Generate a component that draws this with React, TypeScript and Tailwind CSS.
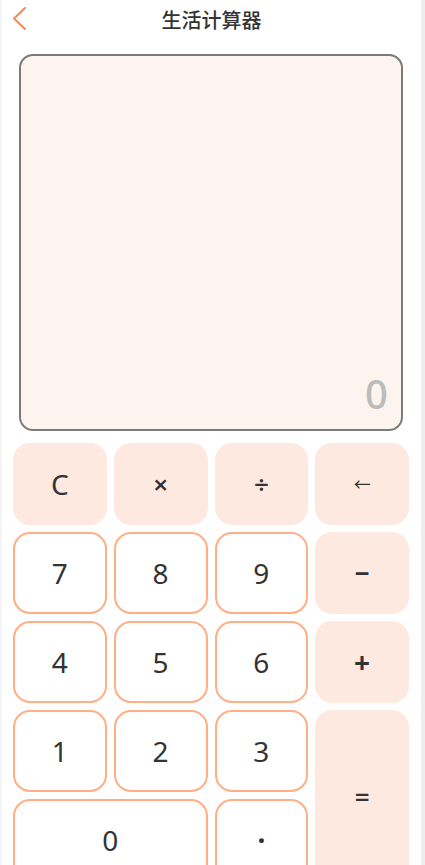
const keys = [
    { label: "C", kind: "op", cls: "text-[28px]" },
    { label: "×", kind: "op", cls: "text-[26px] font-semibold" },
    { label: "÷", kind: "op", cls: "text-[26px] font-semibold" },
    { label: "←", kind: "op", cls: "text-[17px]" },
    { label: "7", kind: "num", cls: "text-[28px]" },
    { label: "8", kind: "num", cls: "text-[28px]" },
    { label: "9", kind: "num", cls: "text-[28px]" },
    { label: "−", kind: "op", cls: "text-[26px] font-bold" },
    { label: "4", kind: "num", cls: "text-[28px]" },
    { label: "5", kind: "num", cls: "text-[28px]" },
    { label: "6", kind: "num", cls: "text-[28px]" },
    { label: "+", kind: "op", cls: "text-[28px] font-bold" },
    { label: "1", kind: "num", cls: "text-[28px]" },
    { label: "2", kind: "num", cls: "text-[28px]" },
    { label: "3", kind: "num", cls: "text-[28px]" },
    { label: "=", kind: "op", cls: "row-span-2 text-[26px] font-semibold" },
    { label: "0", kind: "num", cls: "col-span-2 text-[28px]" },
    { label: "·", kind: "num", cls: "text-[28px] font-bold" }
];

const App = () => {
    return (
        <div
            className="flex w-[425px] h-[865px] overflow-hidden bg-white text-[#333333]"
            style={{ fontFamily: '"Noto Sans", "Noto Sans CJK SC", sans-serif' }}
        >
            <div className="w-[2px] shrink-0 bg-[#f4f4f4]" />
            <div className="flex-1 flex flex-col">
                {/* header */}
                <div className="relative h-[40px] shrink-0 flex items-center justify-center">
                    <svg
                        className="absolute left-[10px] top-[6px]"
                        width="16"
                        height="26"
                        viewBox="0 0 16 26"
                        fill="none"
                    >
                        <polyline
                            points="13,2 2,12.5 13,23"
                            stroke="#f7874f"
                            strokeWidth="2"
                            strokeLinecap="round"
                            strokeLinejoin="round"
                        />
                    </svg>
                    <h1 className="text-[20px] font-medium leading-none mt-[2px]">
                        生活计算器
                    </h1>
                </div>

                {/* display */}
                <div className="shrink-0 mt-[14px] ml-[17px] mr-[18px] h-[377px] rounded-[14px] border-2 border-[#7b7b7b] bg-[#fdf4ef] flex items-end justify-end pr-[13px] pb-[15px]">
                    <span className="text-[40px] font-medium leading-none text-[#bcbcbc]">0</span>
                </div>

                {/* keypad */}
                <div className="shrink-0 mt-[12px] ml-[11px] mr-[12px] grid grid-cols-4 auto-rows-[82px] gap-x-[7px] gap-y-[7px]">
                    {keys.map((k, index) => {
                        const base =
                            k.kind === "op"
                                ? "bg-[#fee9e1]"
                                : "bg-white border-2 border-[#ffae85]";
                        return (
                            <div
                                key={index}
                                className={`${base} ${k.cls} rounded-[17px] flex items-center justify-center leading-none`}
                            >
                                {k.label}
                            </div>
                        );
                    })}
                </div>
            </div>
            <div className="w-[4px] shrink-0 bg-[#eeeeee]" />
        </div>
    );
};

export default App;
